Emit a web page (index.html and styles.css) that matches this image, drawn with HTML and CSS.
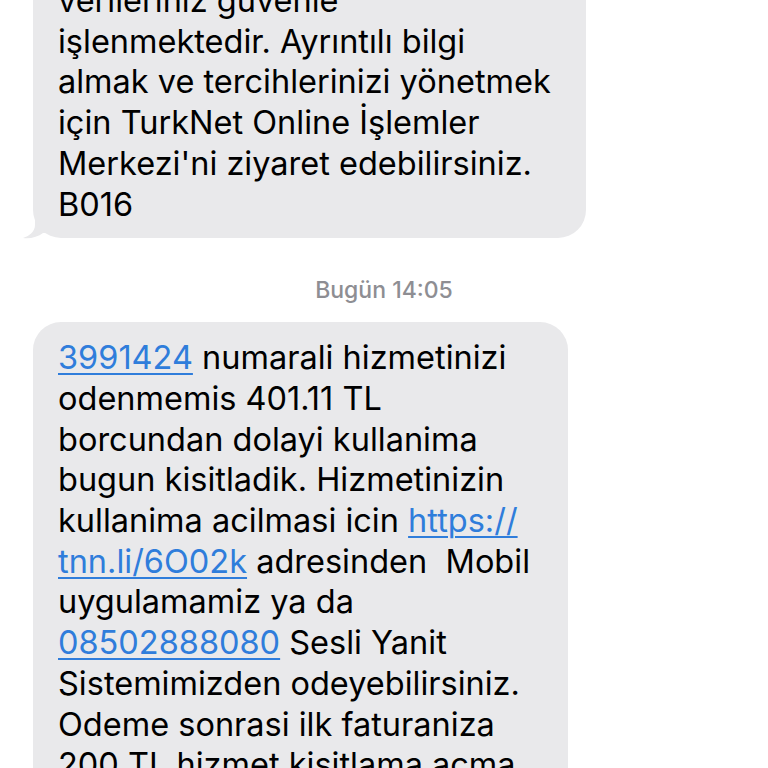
FILE: index.html
```html
<!DOCTYPE html>
<html lang="tr">
<head>
<meta charset="utf-8">
<link rel="stylesheet" href="styles.css">
</head>
<body>
<main class="thread">
  <div class="bubble bubble-first">
    <p class="msg">verileriniz güvenle<br>işlenmektedir. Ayrıntılı bilgi<br>almak ve tercihlerinizi yönetmek<br>için TurkNet Online İşlemler<br>Merkezi'ni ziyaret edebilirsiniz.<br>B016</p>
    <svg class="tail" width="24" height="28" viewBox="0 0 24 28"><path d="M13 0 L13 14 C13 20 8 25 1 27 C8 28 16 26 21 22 L24 22 L24 0 Z" fill="#e9e9eb"/></svg>
  </div>
  <div class="stamp"><span class="day">Bugün</span> 14:05</div>
  <div class="bubble bubble-second">
    <p class="msg"><a class="link">3991424</a> numarali hizmetinizi<br>odenmemis 401.11 TL<br>borcundan dolayi kullanima<br>bugun kisitladik. Hizmetinizin<br>kullanima acilmasi icin <a class="link">https://</a><br><a class="link">tnn.li/6O02k</a> adresinden &nbsp;Mobil<br>uygulamamiz ya da<br><a class="link">08502888080</a> Sesli Yanit<br>Sistemimizden odeyebilirsiniz.<br>Odeme sonrasi ilk faturaniza<br>200 TL hizmet kisitlama acma<br>bedeli yansitilacaktir.</p>
  </div>
</main>
</body>
</html>
```
FILE: styles.css
```css
html, body {
  margin: 0;
  padding: 0;
  background: #ffffff;
  overflow: hidden;
}
body {
  width: 768px;
  height: 768px;
  font-family: "Inter", "Liberation Sans", sans-serif;
}
.thread {
  display: flex;
  flex-direction: column;
  align-items: flex-start;
  padding-left: 33px;
}
.bubble {
  position: relative;
  background: #e9e9eb;
  border-radius: 28px;
  padding: 14px 25px 13px 25px;
  box-sizing: border-box;
}
.bubble-first {
  width: 553px;
  margin-top: -33px;
}
.bubble-second {
  width: 535px;
  padding-top: 16px;
}
.msg {
  margin: 0;
  font-size: 32.5px;
  line-height: 40.7px;
  color: #000;
  white-space: nowrap;
  letter-spacing: 0;
}
.link {
  color: #2f7ddb;
  text-decoration: underline;
  text-decoration-thickness: 2px;
  text-underline-offset: 4px;
}
.tail {
  position: absolute;
  left: -11px;
  bottom: -1px;
}
.stamp {
  align-self: stretch;
  margin-left: -33px;
  text-align: center;
  font-size: 23px;
  font-weight: 500;
  color: #8e8e93;
  padding: 39px 0 19px;
  line-height: 26px;
}
```
